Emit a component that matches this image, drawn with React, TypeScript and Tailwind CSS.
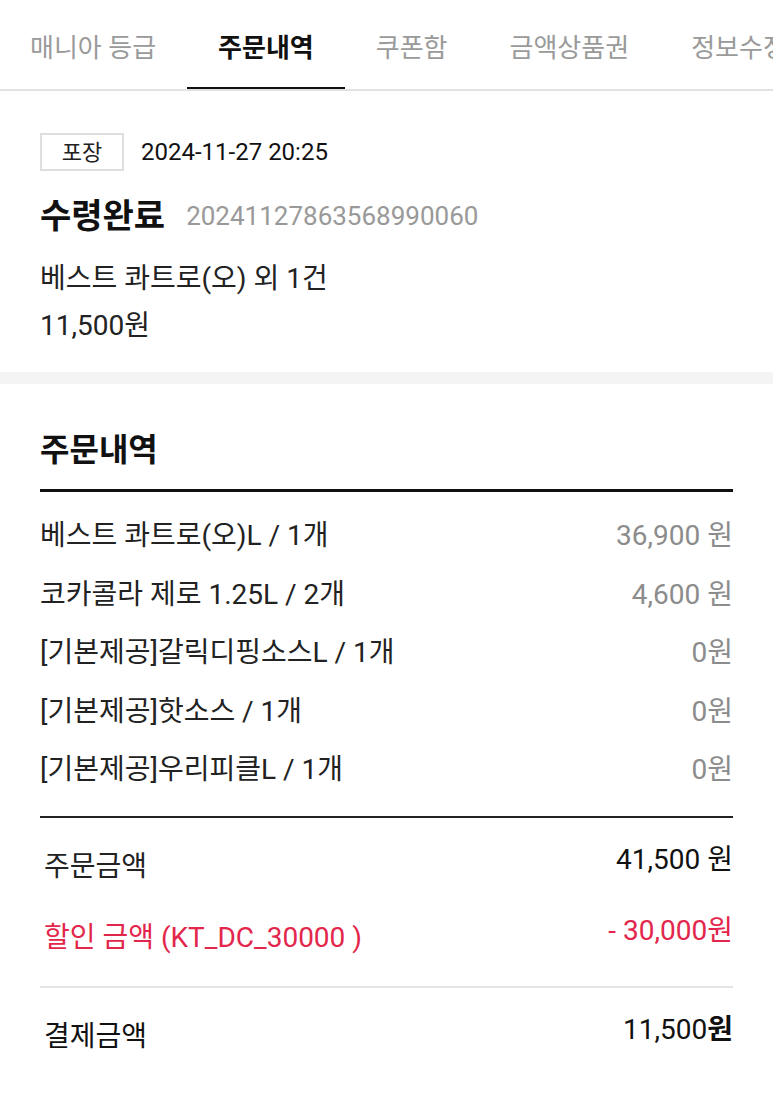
import React from 'react';

const font = { fontFamily: 'Roboto, "Noto Sans CJK KR", sans-serif' };

const tabs = ['매니아 등급', '주문내역', '쿠폰함', '금액상품권', '정보수정'];

const items = [
  { name: '베스트 콰트로(오)L / 1개', price: '36,900 원' },
  { name: '코카콜라 제로 1.25L / 2개', price: '4,600 원' },
  { name: '[기본제공]갈릭디핑소스L / 1개', price: '0원' },
  { name: '[기본제공]핫소스 / 1개', price: '0원' },
  { name: '[기본제공]우리피클L / 1개', price: '0원' },
];

const App: React.FC = () => {
  return (
    <div className="w-[773px] min-h-[1111px] bg-white text-[#222]" style={font}>
      {/* 상단 탭 */}
      <div className="flex overflow-hidden whitespace-nowrap border-b-2 border-[#e2e2e2] h-[91px]">
        {tabs.map((t, i) => (
          <div
            key={t}
            className={
              t === '주문내역'
                ? 'relative shrink-0 pl-[31px] pr-[31px] flex items-center pt-[8px] text-[26px] font-bold text-[#111]'
                : i === 0
                ? 'relative shrink-0 pl-[30px] pr-[31px] flex items-center pt-[8px] text-[26px] text-[#9a9a9a]'
                : 'relative shrink-0 pl-[31px] pr-[31px] flex items-center pt-[8px] text-[26px] text-[#9a9a9a]'
            }
          >
            {t}
            {t === '주문내역' && (
              <span className="absolute left-0 right-0 bottom-[-2px] h-[4px] bg-[#111]" />
            )}
          </div>
        ))}
      </div>

      {/* 주문 요약 */}
      <div className="px-[40px] pt-[42px] pb-[26px]">
        <div className="flex items-center h-[38px]">
          <span className="w-[84px] h-[38px] flex items-center justify-center border-2 border-[#dedede] text-[22px] text-[#222]">
            포장
          </span>
          <span className="ml-[17px] text-[24px] text-[#111]">2024-11-27 20:25</span>
        </div>
        <div className="flex items-center mt-[23px] h-[44px]">
          <span className="text-[34px] font-bold text-[#111]">수령완료</span>
          <span className="ml-[21px] text-[26px] text-[#999]">20241127863568990060</span>
        </div>
        <p className="mt-[21px] text-[28px] leading-[40px]">베스트 콰트로(오) 외 1건</p>
        <p className="mt-[7px] text-[28px] leading-[40px]">11,500원</p>
      </div>

      <div className="h-[12px] bg-[#f4f4f4]" />

      {/* 주문내역 */}
      <div className="px-[40px] pt-[46px]">
        <h2 className="text-[32px] font-bold leading-[40px] text-[#111]">주문내역</h2>
        <div className="mt-[19px] h-[3px] bg-[#111]" />
        <ul className="pt-[15px]">
          {items.map((it) => (
            <li key={it.name} className="flex items-center justify-between h-[58.5px] text-[28px]">
              <span className="text-[#222]">{it.name}</span>
              <span className="text-[#8c8c8c]">{it.price}</span>
            </li>
          ))}
        </ul>
        <div className="mt-[16px] h-[2px] bg-[#222]" />

        <div className="pt-[24px]">
          <div className="flex justify-between items-start">
            <span className="mt-[7px] pl-[4px] text-[28px] leading-[36px] text-[#222]">주문금액</span>
            <span className="text-[28px] leading-[36px] text-[#111]">41,500 원</span>
          </div>
          <div className="flex justify-between items-start mt-[28px] text-[#e3264b]">
            <span className="mt-[7px] pl-[4px] text-[28px] leading-[36px]">할인 금액 (KT_DC_30000 )</span>
            <span className="text-[28px] leading-[36px]">- 30,000원</span>
          </div>
        </div>
        <div className="mt-[30px] h-[2px] bg-[#e5e5e5]" />
        <div className="flex justify-between items-start mt-[24px]">
          <span className="mt-[7px] pl-[4px] text-[28px] leading-[36px] text-[#111]">결제금액</span>
          <span className="text-[28px] leading-[36px] text-[#111]">
            11,500<span className="font-bold">원</span>
          </span>
        </div>
      </div>
    </div>
  );
};

export default App;
